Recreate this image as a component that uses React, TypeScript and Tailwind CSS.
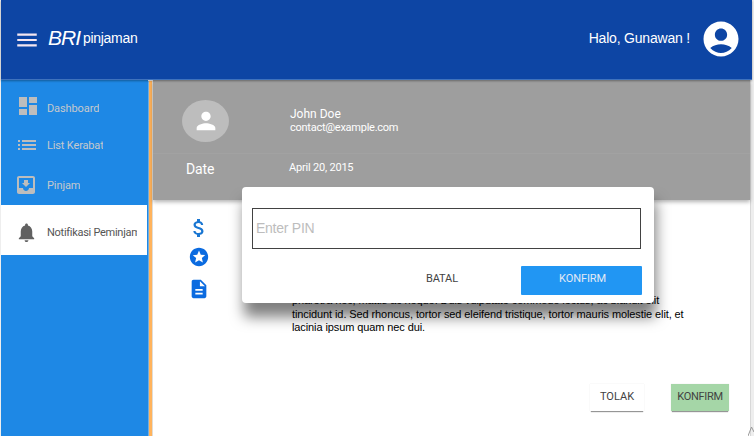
import type { ReactNode } from 'react';
import {
  MdAccountCircle,
  MdAttachMoney,
  MdDashboard,
  MdDescription,
  MdMenu,
  MdMoveToInbox,
  MdNotifications,
  MdPerson,
  MdStars,
} from 'react-icons/md';

type NavItemProps = { icon: ReactNode; label: string; className: string; labelClass?: string };

function NavItem({ icon, label, className, labelClass = '' }: NavItemProps) {
  return (
    <li className={`flex items-center ${className}`}>
      <span className="flex w-[46px] shrink-0">{icon}</span>
      <span className={`overflow-hidden whitespace-nowrap text-[11px] leading-4 ${labelClass}`}>{label}</span>
    </li>
  );
}

function ListIcon() {
  return (
    <svg className="ml-[17px]" width="18" height="10" viewBox="0 0 18 10" fill="#bdbdbd">
      <path d="M0 0h2v2H0zM0 4h2v2H0zM0 8h2v2H0zM4 0h14v2H4zM4 4h14v2H4zM4 8h14v2H4z" />
    </svg>
  );
}

function Header() {
  return (
    <header className="relative z-10 flex h-20 w-[751px] items-center border-b border-[#3f72bd] bg-[#0d45a4] text-white shadow-[0_1px_2px_rgba(0,0,0,0.35)]">
      <MdMenu className="ml-[13px] size-[26px] text-[#f5e6f0]" />
      <span className="ml-[8px] w-[35px] pb-[3px] font-['Liberation_Sans',sans-serif] text-[21px] leading-6 tracking-[-0.9px] italic">BRI</span>
      <span className="pb-[3px] font-['Liberation_Sans',sans-serif] text-[14px] leading-5 tracking-[-0.3px]">pinjaman</span>
      <span className="mr-[10px] ml-auto pb-[3px] font-['Liberation_Sans',sans-serif] text-[14px] leading-5 tracking-[-0.2px] whitespace-nowrap">Halo, Gunawan !</span>
      <MdAccountCircle className="mr-[10px] mb-[2px] size-[42px]" />
    </header>
  );
}

function Sidebar() {
  return (
    <nav className="w-[147px] shrink-0 bg-[#1e88e5] pt-[7px] text-[#c5c8cc]">
      <ul>
        <NavItem className="h-[38px]" labelClass="pt-[5px] tracking-[-0.1px]" label="Dashboard" icon={<MdDashboard className="ml-[15px] size-6 text-[#bdbdbd]" />} />
        <NavItem className="h-10" labelClass="w-[56px] pt-px tracking-[-0.15px]" label="List Kerabat" icon={<ListIcon />} />
        <NavItem className="h-10" labelClass="pt-px tracking-[-0.1px]" label="Pinjam" icon={<MdMoveToInbox className="ml-[13px] size-6 text-[#bdbdbd]" />} />
        <NavItem className="h-[50px] w-[146px] bg-white text-[#555]" labelClass="w-[90px] pt-[5px] tracking-[-0.28px]" label="Notifikasi Peminjam" icon={<MdNotifications className="mt-[5px] ml-[14px] size-[23px] text-[#616161]" />} />
      </ul>
    </nav>
  );
}

function Profile() {
  return (
    <section className="h-[120px] w-full bg-[#9e9e9e] text-white shadow-[0_2px_4px_rgba(0,0,0,0.3)]">
      <div className="flex h-[74px] border-b border-[#a2a2a2] pl-[29px]">
        <div className="mt-[20px] flex h-[42px] w-[47px] items-center justify-center rounded-[50%] bg-[#bdbdbd]">
          <MdPerson className="size-7" />
        </div>
        <div className="mt-[27px] ml-[61px]">
          <p className="text-[12px] leading-[14px]">John Doe</p>
          <p className="text-[11px] leading-[13px] tracking-[-0.26px]">contact@example.com</p>
        </div>
      </div>
      <div className="flex pl-[33px]">
        <span className="mt-[5px] w-[103px] text-[14px] leading-5 tracking-[-0.1px]">Date</span>
        <span className="mt-[6px] text-[11px] leading-4 tracking-[-0.2px]">April 20, 2015</span>
      </div>
    </section>
  );
}

function Details() {
  return (
    <section className="flex h-[184px] pl-[33px]">
      <div className="flex w-[26px] flex-col items-center pt-[16px] text-[#0b6be0]">
        <MdAttachMoney className="size-6 text-[#1976d2]" />
        <MdStars className="mt-[6px] size-[22px]" />
        <MdDescription className="mt-[10px] size-[22px]" />
      </div>
      <p className="mt-[94px] ml-[80px] font-['Liberation_Sans',sans-serif] text-[11px] leading-[13.5px] tracking-[-0.1px] whitespace-nowrap text-black">
        pharetra nec, mattis ac neque. Duis vulputate commodo lectus, ac blandit elit
        <br />
        tincidunt id. Sed rhoncus, tortor sed eleifend tristique, tortor mauris molestie elit, et
        <br />
        lacinia ipsum quam nec dui.
      </p>
    </section>
  );
}

function PinDialog() {
  return (
    <div role="dialog" className="absolute top-[187px] left-[242px] z-20 h-[116px] w-[412px] rounded-[4px] bg-white px-[10px] pt-[21px] shadow-[2px_14px_14px_rgba(0,0,0,0.5)]">
      <div className="flex h-[41px] w-[389px] items-center border border-[#424242] pl-[3px] font-['Liberation_Sans',sans-serif] text-[14px] tracking-[-0.25px] text-[#bdbdbd]">
        Enter PIN
      </div>
      <div className="mt-[17px] flex text-[11px]">
        <button className="ml-auto h-[29px] w-[78px] pb-[3px] tracking-[-0.15px] text-[#424242]">BATAL</button>
        <button className="mr-[2px] ml-[40px] h-[29px] w-[121px] rounded-[1px] bg-[#2196f3] pb-[3px] pl-[2px] tracking-[-0.1px] text-[#e3eaf5]">KONFIRM</button>
      </div>
    </div>
  );
}

export default function App() {
  return (
    <div className="relative h-[436px] w-[754px] overflow-hidden bg-[#eeeeee] pl-px font-[Roboto,sans-serif]">
      <Header />
      <div className="flex h-[356px] w-[750px] border-r border-[#d8d8d8] bg-white">
        <Sidebar />
        <div className="mt-px w-[5px] shrink-0 border-x border-l-[#72aee0] border-r-[#e0dcd5] bg-[#ffb35c]" />
        <main className="min-w-0 flex-1">
          <Profile />
          <Details />
          <div className="flex justify-end pr-[21px] text-[11px] text-[#424242]">
            <button className="mr-[27px] h-[27px] w-[54px] bg-white shadow-[0_2px_1px_-1px_rgba(0,0,0,0.4),0_0_1px_rgba(0,0,0,0.12)]">TOLAK</button>
            <button className="h-[27px] w-[58px] bg-[#a5d6a7] tracking-[-0.3px] shadow-[0_2px_1px_-1px_rgba(0,0,0,0.4),0_0_1px_rgba(0,0,0,0.12)]">KONFIRM</button>
          </div>
        </main>
      </div>
      <PinDialog />
      <svg className="absolute right-0 bottom-0" width="6" height="10" viewBox="0 0 6 10" fill="none" stroke="#999">
        <path d="M0 10 L3.5 1 L6 6" />
      </svg>
    </div>
  );
}
